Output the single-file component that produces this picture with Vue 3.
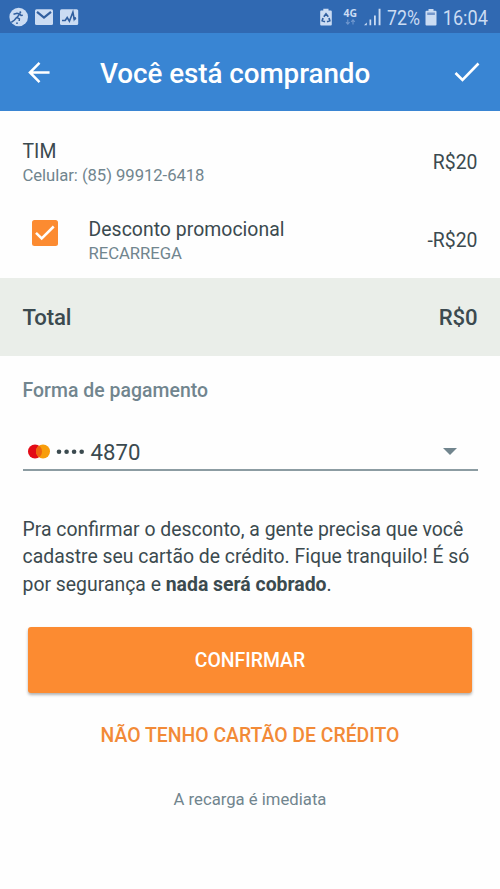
<script setup>
const items = [
  { title: 'TIM', detail: 'Celular: (85) 99912-6418', price: 'R$20', promo: false },
  { title: 'Desconto promocional', detail: 'RECARREGA', price: '-R$20', promo: true },
]
</script>

<template>
  <main class="screen">
    <header>
      <svg class="status" viewBox="0 0 500 33">
        <g fill="#cbdcf3">
          <circle cx="18.700" cy="17" r="9.300" />
          <rect x="35" y="9.300" width="18" height="15.700" rx="1.500" />
          <rect x="60" y="9.300" width="18.200" height="15.700" rx="1.500" />
        </g>
        <g fill="none" stroke="#315f9f" stroke-width="1.500">
          <path d="M13.500 14.200l3.500-1 2.700.7-2.700 3.600 2.400 1.300-.2 2.200M16.800 17.200l-2.300 2.800-3.200 2.400M19.700 13.900l1.300 1.600 1.800-.3" />
          <path d="M37 11.800l7 5.700 7-5.700" stroke-width="2.200" />
          <path d="M62 20.500h3.200l2-3 2.200 3.700 3.500-9 1.300 7 .8-1.600" stroke-width="1.600" />
        </g>
        <g fill="#315f9f">
          <circle cx="20.300" cy="12.200" r="1" />
          <circle cx="17" cy="23.200" r=".9" />
          <circle cx="74.800" cy="18.500" r="1.400" />
        </g>
        <path fill="#cbdcf3" d="M323.300 8.800h5.200v1.800h2.300q1 0 1 1V24.400q0 1-1 1H321.200q-1 0-1-1V11.600q0-1 1-1h2.100z" />
        <path d="M323.800 16.800l2.200-3 2.300 3M329 18l.8 2.700-2.800 1M325 21.700l-2.800-1 .8-2.700" fill="none" stroke="#315f9f" stroke-width="1.700" />
        <text x="343.600" y="17" class="network" textLength="13.500" lengthAdjust="spacingAndGlyphs">4G</text>
        <path d="M347.800 19.500v4.500M346 22.200l1.800 2 1.800-2M353 24.500V20M351.200 21.800l1.800-2 1.800 2" stroke="#6f97ce" stroke-width="1.100" fill="none" />
        <path d="M364 25.300l2.800-2.800v2.800zM369.500 19.500h1.700v5.800h-1.700zM374 15.500h1.800v9.800H374zM378.600 8.800h1.900v16.500h-1.900z" fill="#cbdcf3" />
        <text x="387" y="25" class="reading" textLength="33" lengthAdjust="spacingAndGlyphs">72%</text>
        <path fill="#cbdcf3" d="M428.500 9h5v1.800h2q1 0 1 1v12.600q0 1-1 1h-9q-1 0-1-1V11.800q0-1 1-1h2z" />
        <path fill="#7396cb" d="M427.200 12.500h7.700v2.500h-7.700z" />
        <text x="442.800" y="25" class="reading" textLength="45" lengthAdjust="spacingAndGlyphs">16:04</text>
      </svg>
      <div class="appbar">
        <svg class="back" viewBox="0 0 24 24"><path d="M22.500 12H2M12 2L2 12l10 10" /></svg>
        <h1>Você está comprando</h1>
        <svg class="done" viewBox="0 0 26 20"><path d="M1.500 11l7 7L24.500 1.500" /></svg>
      </div>
    </header>

    <section class="items">
      <div v-for="item in items" :key="item.title" class="item">
        <svg v-if="item.promo" class="checkbox" viewBox="0 0 26 26">
          <rect width="26" height="26" rx="2.500" fill="#fc8b31" />
          <path d="M4 12.800l5.700 5.700L21.700 6.500" fill="none" stroke="#fff" stroke-width="2.500" />
        </svg>
        <div class="label">
          <div class="name">{{ item.title }}</div>
          <div class="detail">{{ item.detail }}</div>
        </div>
        <div class="price">{{ item.price }}</div>
      </div>
    </section>

    <div class="total"><span>Total</span><span>R$0</span></div>

    <section class="payment">
      <h2>Forma de pagamento</h2>
      <div class="select">
        <svg class="card" viewBox="0 0 58 16">
          <circle cx="7" cy="7.500" r="7" fill="#e30b17" />
          <circle cx="15" cy="7.500" r="7" fill="#f89d0b" />
          <path d="M11 1.750a7 7 0 0 1 0 11.500a7 7 0 0 1 0-11.500z" fill="#ee6510" />
          <g fill="#3b4a4f">
            <circle cx="31" cy="7.800" r="2.300" /><circle cx="38.600" cy="7.800" r="2.300" />
            <circle cx="46.100" cy="7.800" r="2.300" /><circle cx="53.700" cy="7.800" r="2.300" />
          </g>
        </svg>
        <span>4870</span>
        <svg class="caret" viewBox="0 0 14 7"><path d="M0 0h14L7 7z" fill="#71858e" /></svg>
      </div>
      <p class="note">Pra confirmar o desconto, a gente precisa que você<br>cadastre seu cartão de crédito. Fique tranquilo! É só<br>por segurança e <b>nada será cobrado</b>.</p>
      <button class="confirm">CONFIRMAR</button>
      <button class="no-card">NÃO TENHO CARTÃO DE CRÉDITO</button>
      <p class="footnote">A recarga é imediata</p>
    </section>
  </main>
</template>

<style>
body { background: #fefefe; }
</style>

<style scoped>
.screen {
  width: 500px;
  height: 889px;
  overflow: hidden;
  background: #fefefe;
  color: #3b4a4f;
  font-family: Roboto, sans-serif;
}
h1, h2, p { margin: 0; }
header { background: #3985d3; }
.status { display: block; width: 500px; height: 33px; background: #3069b2; }
.network { font: bold 10.500px "Open Sans", sans-serif; fill: #cbdcf3; }
.reading { font: 400 20.500px Roboto, sans-serif; fill: #cbdcf3; }
.appbar {
  display: flex;
  align-items: center;
  height: 78px;
  padding: 0 20px 0 28px;
  box-sizing: border-box;
  color: #fff;
}
.appbar path { fill: none; stroke: #fff; stroke-width: 2.600; }
.back { width: 23px; height: 23px; }
h1 {
  flex: 1;
  margin-left: 49px;
  padding-top: 3px;
  font-weight: 500;
  font-size: 27.800px;
  line-height: 36px;
  letter-spacing: -.05px;
}
.done { width: 26px; height: 20px; }
.items { padding-top: 12px; height: 155px; }
.item {
  display: flex;
  align-items: center;
  height: 78px;
  padding: 0 22.500px;
}
.label { flex: 1; padding-top: 3px; }
.name { font-size: 19.400px; line-height: 25px; letter-spacing: .04px; }
.detail { font-size: 16.700px; line-height: 24px; letter-spacing: -.06px; color: #71858e; }
.price { font-size: 19.400px; }
.checkbox { width: 26px; height: 26px; margin: -14px 31px 0 9px; }
.total {
  display: flex;
  align-items: center;
  justify-content: space-between;
  height: 77.500px;
  padding: 0 22.500px;
  background: #eaeee9;
  font-size: 22.200px;
  font-weight: 500;
  letter-spacing: -.15px;
}
.payment { padding: 22.500px 22.500px 0; display: flex; flex-direction: column; }
h2 { font-size: 19.400px; line-height: 26px; font-weight: 500; letter-spacing: .05px; color: #71858e; }
.select {
  display: flex;
  align-items: center;
  height: 33.500px;
  margin-top: 30px;
  padding: 1px 21px 0 5px;
  border-bottom: 2px solid #8c9ca2;
  font-size: 22.200px;
}
.card { width: 58px; height: 16px; margin-right: 5px; }
.select span { flex: 1; }
.caret { width: 14px; height: 7px; }
.note { margin-top: 45.500px; font-size: 19.400px; line-height: 27.300px; white-space: nowrap; }
button { border: 0; padding: 0; font-family: inherit; font-weight: 500; font-size: 19.400px; }
.confirm {
  height: 66px;
  margin: 28.800px 5.500px 0;
  padding-top: 2px;
  border-radius: 3px;
  background: #fc8b31;
  color: #fff;
  box-shadow: 0 2px 3px rgba(0, 0, 0, .3);
}
.no-card { height: 50px; margin-top: 17.800px; background: none; color: #f28a37; }
.footnote { margin-top: 27.700px; text-align: center; font-size: 16.700px; line-height: 24px; color: #71858e; }
</style>
